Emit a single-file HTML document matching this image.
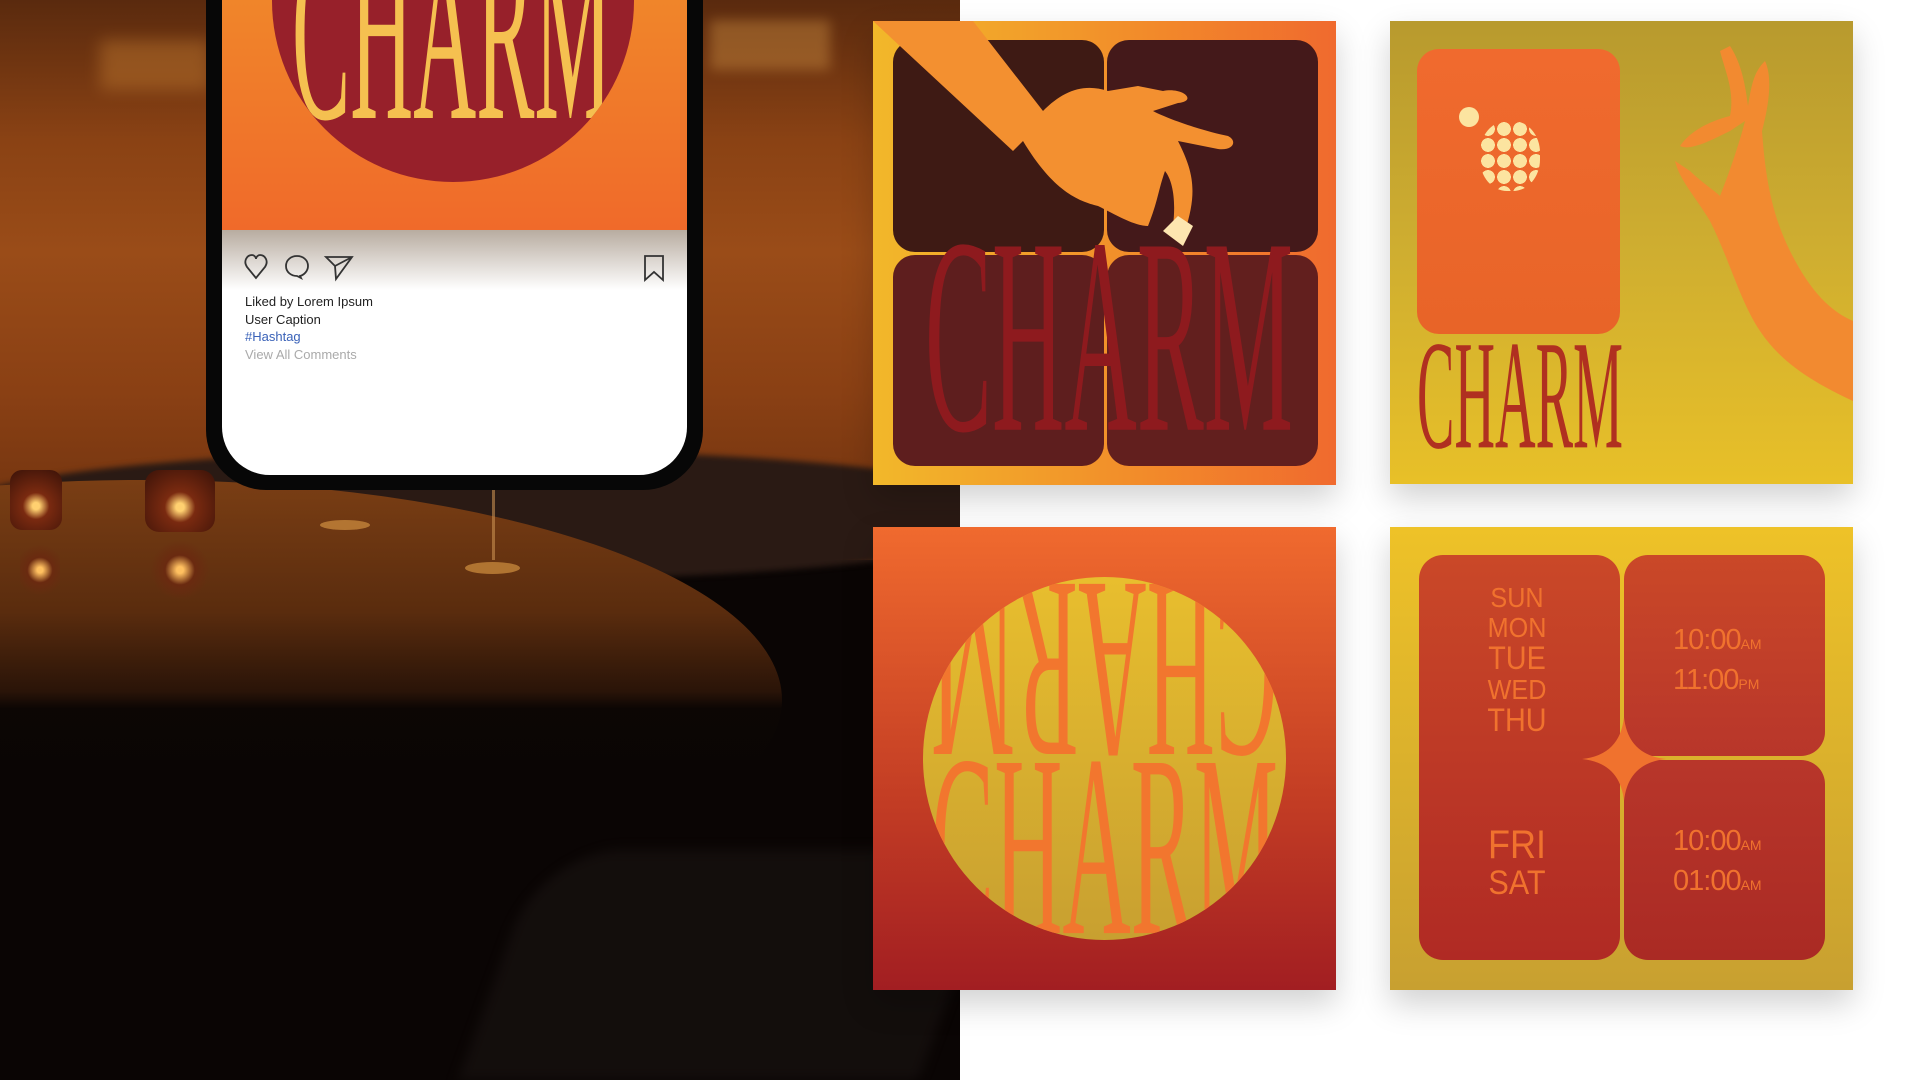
<!DOCTYPE html>
<html><head><meta charset="utf-8"><style>
*{margin:0;padding:0;box-sizing:border-box}
body{width:1920px;height:1080px;overflow:hidden;background:#fff;position:relative;font-family:"Liberation Sans",sans-serif}
.abs{position:absolute}
.photo{left:0;top:0;width:960px;height:1080px;overflow:hidden;background:#0a0504}
.card{box-shadow:0 14px 30px rgba(0,0,0,.18)}
.day{font-family:"Liberation Sans",sans-serif;color:#f0722e;font-size:28px;line-height:30px;text-align:center;transform:scaleX(.9)}
.tm{font-family:"Liberation Sans",sans-serif;color:#f0722e;font-size:29px;line-height:36px;letter-spacing:-1px}
.tm small{font-size:14px;letter-spacing:0}
svg text{font-family:"Liberation Serif",serif}
</style></head><body>

<div class="abs photo">
  <div class="abs" style="left:0;top:0;width:960px;height:560px;background:linear-gradient(180deg,#5a2a0e 0%,#8a4214 25%,#9a4c18 45%,#8a4014 70%,#6a300e 100%)"></div>
  <div class="abs" style="left:100px;top:40px;width:110px;height:50px;background:#c07a30;opacity:.45;filter:blur(8px)"></div>
  <div class="abs" style="left:710px;top:20px;width:120px;height:50px;background:#c88a40;opacity:.45;filter:blur(6px)"></div>
  <div class="abs" style="left:-60px;top:450px;width:1100px;height:130px;border-radius:50%;background:#2a1a14;filter:blur(3px)"></div>
  <div class="abs" style="left:-500px;top:480px;width:1282px;height:440px;border-radius:50%;background:linear-gradient(180deg,#7a3e14 0%,#5a2c0e 30%,#2a1408 48%,#0c0604 52%,#0a0504 100%)"></div>
  <div class="abs" style="left:0;top:700px;width:960px;height:380px;background:linear-gradient(180deg,rgba(10,5,4,0) ,#0a0504 20%)"></div>
  <div class="abs" style="left:500px;top:850px;width:460px;height:230px;background:#1a1412;border-radius:80px 0 0 0;transform:skewX(-20deg);opacity:.6;filter:blur(6px)"></div>
  <div class="abs" style="left:10px;top:470px;width:52px;height:60px;border-radius:12px;background:radial-gradient(circle at 50% 60%,#ffd070 0 8%,#7a2a10 30%,#3a1208)"></div>
  <div class="abs" style="left:145px;top:470px;width:70px;height:62px;border-radius:14px;background:radial-gradient(circle at 50% 60%,#ffd070 0 8%,#7a2a10 30%,#3a1208)"></div>
  <div class="abs" style="left:20px;top:540px;width:40px;height:60px;border-radius:12px;background:radial-gradient(circle at 50% 50%,#ffc060 0 8%,#6a2a10 35%,transparent 70%)"></div>
  <div class="abs" style="left:150px;top:540px;width:60px;height:60px;border-radius:12px;background:radial-gradient(circle at 50% 50%,#ffc060 0 8%,#6a2a10 35%,transparent 70%)"></div>
  <div class="abs" style="left:320px;top:520px;width:50px;height:10px;border-radius:50%;background:#d09040;opacity:.7"></div>
  <div class="abs" style="left:465px;top:562px;width:55px;height:12px;border-radius:50%;background:#d09040;opacity:.7"></div>
  <div class="abs" style="left:492px;top:490px;width:3px;height:70px;background:#c89050;opacity:.6"></div>
</div>

<!-- phone -->
<div class="abs" style="left:206px;top:-40px;width:497px;height:530px;background:#070707;border-radius:0 0 60px 60px"></div>
<div class="abs" style="left:222px;top:-40px;width:465px;height:515px;background:#fff;border-radius:0 0 48px 48px;overflow:hidden">
  <div class="abs" style="left:0;top:0;width:465px;height:270px;background:linear-gradient(180deg,#f08a2a,#f06a2a)"></div>
  <div class="abs" style="left:0;top:270px;width:465px;height:60px;background:linear-gradient(180deg,#b8aca0,#fff)"></div>
  <div class="abs" style="left:50px;top:-50px;width:362px;height:272px;border-radius:0 0 181px 181px;background:#97202a;overflow:hidden">
    <svg class="abs" style="left:0;top:0" width="362" height="272"><text x="20" y="80" textLength="320" lengthAdjust="spacingAndGlyphs" font-size="100" fill="#f5c050" transform="scale(1,2.6)">CHARM</text></svg>
  </div>
  <svg class="abs" style="left:22px;top:293px" width="420" height="30" viewBox="0 0 420 30" fill="none" stroke="#333" stroke-width="1.8">
    <path d="M12 25 L3 14 C-1 8 3 2 8 2 C10 2 12 4 12 6 C12 4 14 2 16 2 C21 2 25 8 21 14 Z"/>
    <path d="M56 23 C60 22 64 18 64 13 C64 7 59 3 53 3 C47 3 42 7 42 13 C42 19 47 23 53 23 L57 25 Z"/>
    <path d="M82 4 L108 4 L92 26 L91 13 Z M91 13 L108 4"/>
    <path d="M401 3 L401 27 L410 19 L419 27 L419 3 Z"/>
  </svg>
  <div class="abs" style="left:23px;top:333px;font-size:13px;line-height:17.5px;color:#222">
    <div>Liked by Lorem Ipsum</div>
    <div>User Caption</div>
    <div style="color:#3a62b8">#Hashtag</div>
    <div style="color:#aaa">View All Comments</div>
  </div>
</div>

<!-- card 1 -->
<div class="abs card" style="left:873px;top:21px;width:463px;height:464px;background:linear-gradient(90deg,#f2b82a,#f28a2a 60%,#f06a2e);overflow:hidden">
  <div class="abs" style="left:20px;top:19px;width:211px;height:212px;border-radius:22px;background:#3e1a14"></div>
  <div class="abs" style="left:234px;top:19px;width:211px;height:212px;border-radius:22px;background:#44191a"></div>
  <div class="abs" style="left:20px;top:234px;width:211px;height:211px;border-radius:22px;background:#5e1e1e"></div>
  <div class="abs" style="left:234px;top:234px;width:211px;height:211px;border-radius:22px;background:#621f1e"></div>
  <svg class="abs" style="left:0;top:0" width="463" height="464"><text x="52" y="146" textLength="368" lengthAdjust="spacingAndGlyphs" font-size="100" fill="#8e1a1e" transform="scale(1,2.8)">CHARM</text></svg>
  <svg class="abs" style="left:0;top:0" width="463" height="464" viewBox="0 0 463 464">
    <path d="M0 0 L100 0 L170 90 C190 70 210 62 235 70 L265 65 L290 70 C310 66 325 80 305 82 L280 90 C295 98 330 110 355 115 C365 120 360 130 345 128 L305 120 C320 150 325 170 312 210 L300 205 C303 180 300 160 292 150 C285 170 285 180 275 205 C262 205 245 195 225 185 C205 180 180 170 150 120 L140 130 Z" fill="#f39030"/>
    <path d="M290 210 L305 195 L320 205 L310 225 Z" fill="#fde6b0"/>
  </svg>
</div>

<!-- card 2 -->
<div class="abs card" style="left:1390px;top:21px;width:463px;height:463px;background:linear-gradient(180deg,#b89a2e,#cfae30 50%,#e8c028);overflow:hidden">
  <div class="abs" style="left:27px;top:28px;width:203px;height:285px;border-radius:22px;background:linear-gradient(180deg,#f06a2e,#e86428)"></div>
  <div class="abs" style="left:69px;top:86px;width:20px;height:20px;border-radius:50%;background:#fce4a0"></div>
  <div class="abs" style="left:90px;top:100px;width:60px;height:70px;border-radius:45%;background:radial-gradient(circle,#fce4a0 60%,transparent 62%) 0 0/16px 16px"></div>
  <svg class="abs" style="left:0;top:0" width="463" height="463"><text x="27" y="164" textLength="206" lengthAdjust="spacingAndGlyphs" font-size="60" fill="#b03020" transform="scale(1,2.6)">CHARM</text></svg>
  <svg class="abs" style="left:0;top:0" width="463" height="463" viewBox="0 0 463 463">
    <path d="M463 380 C420 360 390 340 370 310 C350 280 340 240 320 200 C305 175 290 160 285 140 L300 150 C310 160 325 170 330 175 C340 150 350 120 355 100 L340 110 C320 120 300 130 290 125 C300 110 320 100 340 95 C345 70 335 50 330 30 L340 25 C350 40 355 60 358 85 C362 60 365 50 375 40 C382 55 380 80 372 110 C375 150 380 190 400 230 C420 270 440 290 463 300 Z" fill="#f28a30"/>
  </svg>
</div>

<!-- card 3 -->
<div class="abs card" style="left:873px;top:527px;width:463px;height:463px;background:linear-gradient(180deg,#f06a2e,#c23c24 60%,#a21e22);overflow:hidden">
  <div class="abs" style="left:50px;top:50px;width:363px;height:363px;border-radius:50%;background:linear-gradient(180deg,#e8be2e,#c8a030);overflow:hidden">
    <svg class="abs" style="left:0;top:0" width="363" height="363">
      <text x="8" y="137" textLength="347" lengthAdjust="spacingAndGlyphs" font-size="100" fill="#f2762e" transform="scale(1,2.6)">CHARM</text>
      <g transform="rotate(180 181.5 181.5)"><text x="8" y="137" textLength="347" lengthAdjust="spacingAndGlyphs" font-size="100" fill="#f2762e" transform="scale(1,2.6)">CHARM</text></g>
    </svg>
  </div>
</div>

<!-- card 4 -->
<div class="abs card" style="left:1390px;top:527px;width:463px;height:463px;background:linear-gradient(180deg,#eec228,#c8a030);overflow:hidden">
  <div class="abs" style="left:29px;top:28px;width:201px;height:405px;border-radius:24px;background:linear-gradient(180deg,#ca4828,#b02a24)"></div>
  <div class="abs" style="left:234px;top:28px;width:201px;height:201px;border-radius:24px;background:linear-gradient(180deg,#ca4828,#b8362a)"></div>
  <div class="abs" style="left:234px;top:233px;width:201px;height:200px;border-radius:24px;background:linear-gradient(180deg,#b8362a,#aa2a24)"></div>
  <svg class="abs" style="left:192px;top:190px" width="84" height="84" viewBox="0 0 84 84"><path d="M42 0 Q46 38 84 42 Q46 46 42 84 Q38 46 0 42 Q38 38 42 0Z" fill="#f0722e"/></svg>
  <div class="abs day" style="left:80px;top:56px;width:94px">SUN<br>MON<br><span style="font-size:32px">TUE</span><br>WED<br><span style="font-size:32px">THU</span></div>
  <div class="abs day" style="left:70px;top:300px;width:114px;font-size:40px;line-height:36px">FRI<br><span style="font-size:34px">SAT</span></div>
  <div class="abs tm" style="left:283px;top:95px">10:00<small>AM</small><br>11:00<small>PM</small></div>
  <div class="abs tm" style="left:283px;top:296px">10:00<small>AM</small><br>01:00<small>AM</small></div>
</div>

</body></html>
